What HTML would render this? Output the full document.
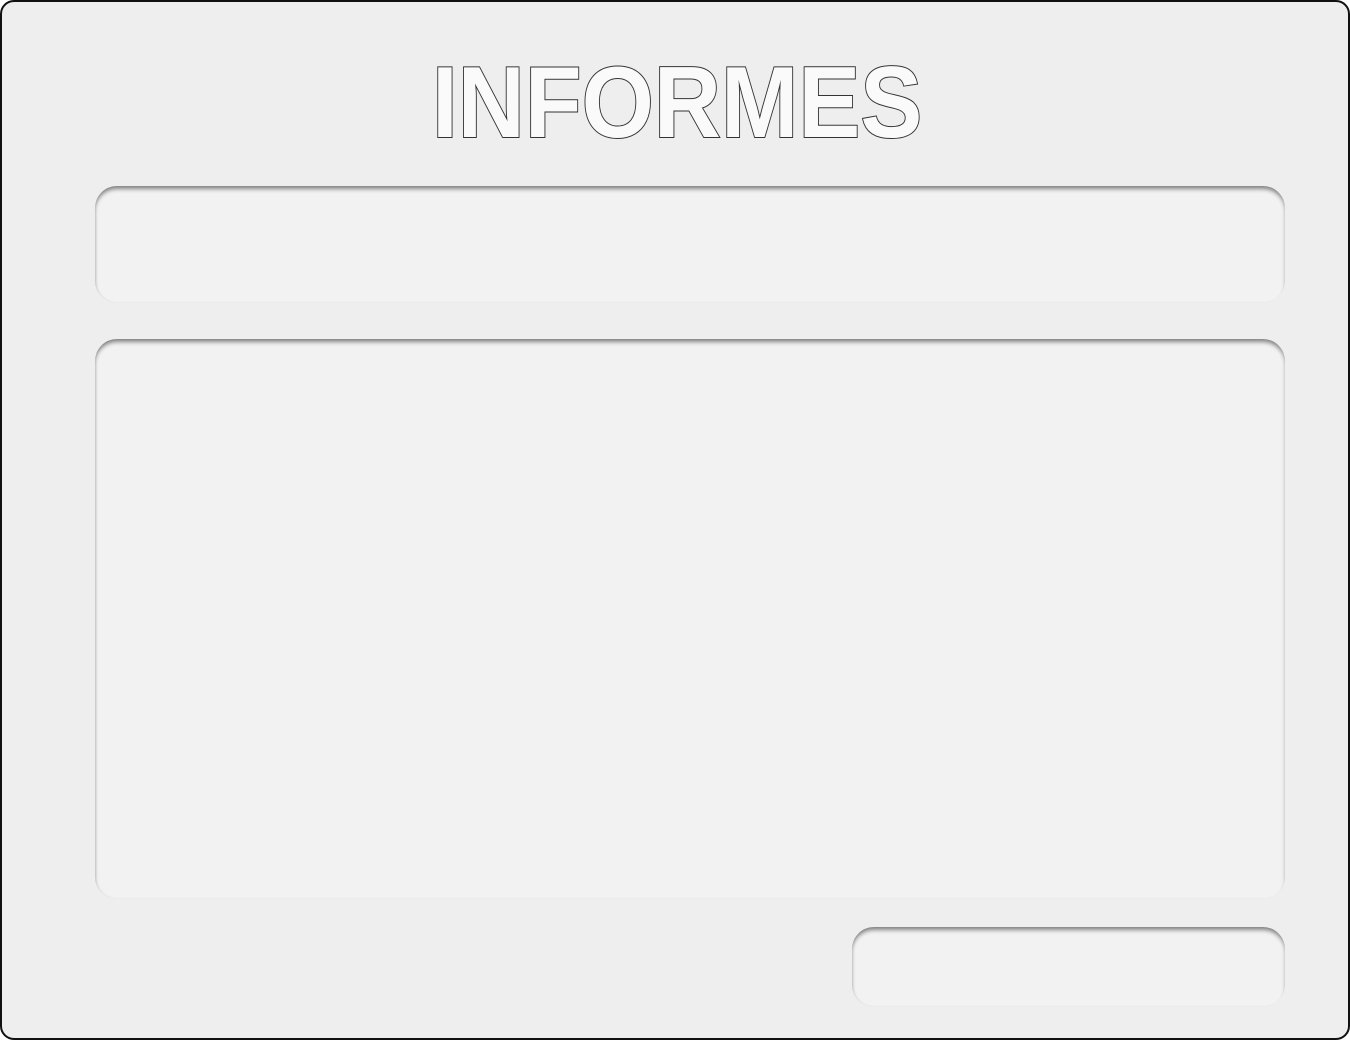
<!DOCTYPE html>
<html><head><style>
html,body{margin:0;padding:0;background:#fff;}
.frame{position:absolute;left:0;top:0;width:1346px;height:1036px;border:2px solid #111;border-radius:14px;background:#eeeeee;overflow:hidden;}
.title{position:absolute;left:0;width:1350px;top:46px;text-align:center;font-family:"Liberation Sans",sans-serif;font-weight:700;font-size:101px;line-height:110px;color:#fafafa;-webkit-text-stroke:2px #333;paint-order:stroke fill;transform:scaleX(0.92);transform-origin:677px 0;}
.box{position:absolute;background:#f2f2f2;border-radius:22px;box-shadow:inset 0 4px 4px -1px rgba(0,0,0,0.45), inset 1px 0 2px rgba(0,0,0,0.08);}
</style></head><body>
<div class="frame">
<div class="title"><b>INFORMES</b></div>
<div class="box" style="left:93px;top:184px;width:1190px;height:117px;"></div>
<div class="box" style="left:93px;top:337px;width:1190px;height:560px;"></div>
<div class="box" style="left:850px;top:925px;width:433px;height:80px;"></div>
</div>
</body></html>
